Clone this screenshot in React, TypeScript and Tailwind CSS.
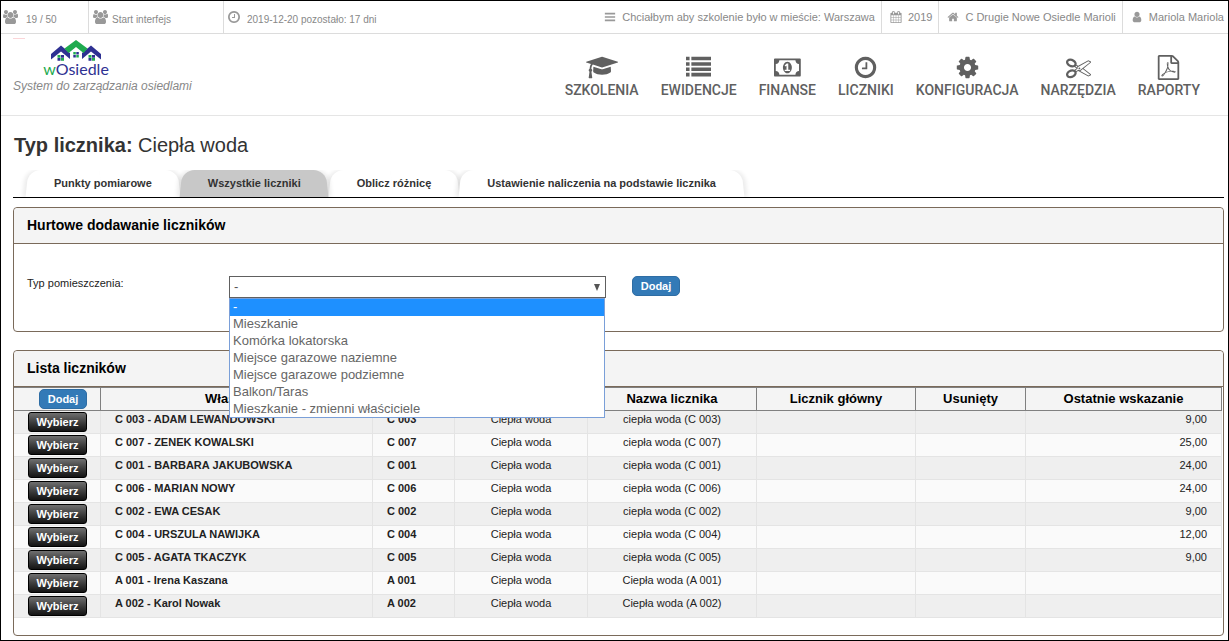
import React from "react";

const icons = {
  users: {
    box: "-64 0 1920 1792",
    d: "M529 896q-162 5-265 128h-134q-82 0-138-40.5t-56-118.5q0-353 124-353 6 0 43.5 21t97.5 42.5 119 21.5q67 0 133-23-5 37-5 66 0 159 93 290zm1071 637q0 120-73 189.5t-194 69.5h-874q-121 0-194-69.5t-73-189.5q0-53 3.5-103.5t14-109 26.5-108.5 43-97.5 62-81 85.5-53.5 111.5-20q10 0 43 21.5t73 48 107 48 135 21.5 135-21.5 107-48 73-48 43-21.5q61 0 111.5 20t85.5 53.5 62 81 43 97.5 26.5 108.5 14 109 3.5 103.5zm-1024-1277q0 106-75 181t-181 75-181-75-75-181 75-181 181-75 181 75 75 181zm704 384q0 159-112.5 271.5t-271.5 112.5-271.5-112.5-112.5-271.5 112.5-271.5 271.5-112.5 271.5 112.5 112.5 271.5zm576 225q0 78-56 118.5t-138 40.5h-134q-103-123-265-128 93-131 93-290 0-29-5-66 66 23 133 23 59 0 119-21.5t97.5-42.5 43.5-21q124 0 124 353zm-128-609q0 106-75 181t-181 75-181-75-75-181 75-181 181-75 181 75 75 181z",
  },
  clock: {
    box: "0 0 1792 1792",
    d: "M1024 544v448q0 14-9 23t-23 9h-320q-14 0-23-9t-9-23v-64q0-14 9-23t23-9h224v-352q0-14 9-23t23-9h64q14 0 23 9t9 23zm416 352q0-148-73-273t-198-198-273-73-273 73-198 198-73 273 73 273 198 198 273 73 273-73 198-198 73-273zm224 0q0 209-103 385.5t-279.5 279.5-385.5 103-385.5-103-279.5-279.5-103-385.5 103-385.5 279.5-279.5 385.5-103 385.5 103 279.5 279.5 103 385.5z",
  },
  bars: {
    box: "0 0 1792 1792",
    d: "M128 1280h1536v256h-1536zM128 768h1536v256h-1536zM128 256h1536v256h-1536z",
  },
  calendar: {
    box: "0 0 1792 1792",
    d: "M192 1664h288v-288h-288v288zm352 0h320v-288h-320v288zm-352-352h288v-320h-288v320zm352 0h320v-320h-320v320zm-352-384h288v-288h-288v288zm736 736h320v-288h-320v288zm-384-736h320v-288h-320v288zm768 736h288v-288h-288v288zm-384-352h320v-320h-320v320zm-352-864v-288q0-13-9.5-22.5t-22.5-9.5h-64q-13 0-22.5 9.5t-9.5 22.5v288q0 13 9.5 22.5t22.5 9.5h64q13 0 22.5-9.5t9.5-22.5zm736 864h288v-320h-288v320zm-384-384h320v-288h-320v288zm384 0h288v-288h-288v288zm32-480v-288q0-13-9.5-22.5t-22.5-9.5h-64q-13 0-22.5 9.5t-9.5 22.5v288q0 13 9.5 22.5t22.5 9.5h64q13 0 22.5-9.5t9.5-22.5zm384-64v1280q0 52-38 90t-90 38h-1408q-52 0-90-38t-38-90v-1280q0-52 38-90t90-38h128v-96q0-66 47-113t113-47h64q66 0 113 47t47 113v96h384v-96q0-66 47-113t113-47h64q66 0 113 47t47 113v96h128q52 0 90 38t38 90z",
  },
  home: {
    box: "0 0 1792 1792",
    d: "M1472 992v480q0 26-19 45t-45 19h-384v-384h-256v384h-384q-26 0-45-19t-19-45v-480q0-1 .5-3t.5-3l575-474 575 474q1 2 1 6zm223-69l-62 74q-8 9-21 11h-3q-13 0-21-7l-692-577-692 577q-12 8-24 7-13-2-21-11l-62-74q-8-10-7-23.5t11-21.5l719-599q32-26 76-26t76 26l244 204v-195q0-14 9-23t23-9h192q14 0 23 9t9 23v408l219 182q10 8 11 21.5t-7 23.5z",
  },
  user: {
    box: "0 0 1792 1792",
    d: "M1536 1399q0 109-62.5 187t-150.5 78h-854q-88 0-150.5-78t-62.5-187q0-85 8.5-160.5t31.5-152 58.5-131 94-89 134.5-34.5q131 128 313 128t313-128q76 0 134.5 34.5t94 89 58.5 131 31.5 152 8.5 160.5zm-256-887q0 159-112.5 271.5t-271.5 112.5-271.5-112.5-112.5-271.5 112.5-271.5 271.5-112.5 271.5 112.5 112.5 271.5z",
  },
  cap: {
    box: "0 0 2304 1792",
    d: "M1774 836l18 316q4 69-82 128t-235 93.5-323 34.5-323-34.5-235-93.5-82-128l18-316 574 181q22 7 48 7t48-7zm530-324q0 23-22 31l-1120 352q-4 1-10 1t-10-1l-652-206q-43 34-71 111.5t-34 178.5q63 36 63 109 0 69-58 107l58 433q2 14-8 25-9 11-24 11h-192q-15 0-24-11-10-11-8-25l58-433q-58-38-58-107 0-73 65-111 11-207 98-330l-333-104q-22-8-22-31t22-31l1120-352q4-1 10-1t10 1l1120 352q22 8 22 31z",
  },
  list: {
    box: "0 0 1792 1792",
    d: "M0 1280h256v256h-256zM0 896h256v256h-256zM0 512h256v256h-256zM384 1280h1408v256h-1408zM0 128h256v256h-256zM384 896h1408v256h-1408zM384 512h1408v256h-1408zM384 128h1408v256h-1408z",
  },
  money: {
    box: "0 0 1920 1792",
    d: "M768 1152h384v-96h-128v-448h-114l-148 137 77 80q42-37 55-57h2v288h-128v96zm512-256q0 70-21 142t-59.5 134-101.5 101-138 39-138-39-101.5-101-59.5-134-21-142 21-142 59.5-134 101.5-101 138-39 138 39 101.5 101 59.5 134 21 142zm512 256v-512q-106 0-181-75t-75-181h-1152q0 106-75 181t-181 75v512q106 0 181 75t75 181h1152q0-106 75-181t181-75zm128-832v1152q0 26-19 45t-45 19h-1792q-26 0-45-19t-19-45v-1152q0-26 19-45t45-19h1792q26 0 45 19t19 45z",
  },
  cog: {
    box: "0 0 1792 1792",
    d: "M1152 896q0-106-75-181t-181-75-181 75-75 181 75 181 181 75 181-75 75-181zm512-109v222q0 12-8 23t-20 13l-185 28q-19 54-39 91 35 50 107 138 10 12 10 25t-9 23q-27 37-99 108t-94 71q-12 0-26-9l-138-108q-44 23-91 38-16 136-29 186-7 28-36 28h-222q-14 0-24.5-8.5t-11.5-21.5l-28-184q-49-16-90-37l-141 107q-10 9-25 9-14 0-25-11-126-114-165-168-7-10-7-23 0-12 8-23 15-21 51-66.5t54-70.5q-27-50-41-99l-183-27q-13-2-21-12.5t-8-23.5v-222q0-12 8-23t19-13l186-28q14-46 39-92-40-57-107-138-10-12-10-24 0-10 9-23 26-36 98.5-107.5t94.5-71.5q13 0 26 10l138 107q44-23 91-38 16-136 29-186 7-28 36-28h222q14 0 24.5 8.5t11.5 21.5l28 184q49 16 90 37l142-107q9-9 24-9 13 0 25 10 129 119 165 170 7 8 7 22 0 12-8 23-15 21-51 66.5t-54 70.5q26 50 41 98l183 28q13 2 21 12.5t8 23.5z",
  },
  scissors: {
    box: "0 0 1792 1792",
    d: "M960 896q26 0 45 19t19 45-19 45-45 19-45-19-19-45 19-45 45-19zm300 64l507 398q28 20 25 56-5 35-35 51l-128 64q-13 7-29 7-17 0-31-8l-690-387-110 66q-8 4-12 5 14 49 10 97-7 77-56 147.5t-132 123.5q-132 84-277 84-136 0-222-78-90-84-79-207 7-76 56-147t131-124q132-84 278-84 83 0 151 31 9-13 22-22l122-73-122-73q-13-9-22-22-68 31-151 31-146 0-278-84-82-53-131-124t-56-147q-5-59 15.5-113t63.5-93q85-79 222-79 145 0 277 84 83 52 132 123t56 148q4 48-10 97 4 1 12 5l110 66 690-387q14-8 31-8 16 0 29 7l128 64q30 16 35 51 3 36-25 56zm-681-260q46-42 21-108t-106-117q-92-59-192-59-74 0-113 36-46 42-21 108t106 117q92 59 192 59 74 0 113-36zm-85 745q81-51 106-117t-21-108q-39-36-113-36-100 0-192 59-81 51-106 117t21 108q39 36 113 36 100 0 192-59zm178-613l96 58v-11q0-36 33-56l14-8-79-44-26 26q-3 3-10 11t-12 12q-2 2-4 3.5t-3 2.5zm224 224l96 32 736-576-128-64-768 431v113l-160 96 9 8q2 2 7 6 4 4 11 12t11 12l26 26zm704 416l128-64-520-408-177 138q-2 3-13 7z",
  },
  pdf: {
    box: "0 0 1792 1792",
    d: "M1596 380q28 28 48 76t20 88v1152q0 40-28 68t-68 28h-1344q-40 0-68-28t-28-68v-1600q0-40 28-68t68-28h896q40 0 88 20t76 48zm-444-244v376h376q-10-29-22-41l-313-313q-12-12-41-22zm384 1528v-1024h-416q-40 0-68-28t-28-68v-416h-768v1536h1280zm-514-593q33 26 84 56 59-7 117-7 147 0 177 49 16 22 2 52 0 1-1 2l-2 2v1q-6 38-71 38-48 0-115-20t-130-53q-221 24-392 83-153 262-242 262-15 0-28-7l-24-12q-1-1-6-5-10-10-6-36 9-40 56-91.5t132-96.5q14-9 23 6 2 2 2 4 52-85 107-197 68-136 104-262-24-82-30.5-159.5t6.5-127.5q11-40 42-40h22q23 0 35 15 18 21 9 68-2 6-4 8 1 3 1 8v30q-2 123-14 192 55 164 146 238zm-576 411q52-24 137-158-51 40-87.5 84t-49.5 74zm398-920q-15 42-2 132 1-7 7-44 0-3 7-43 1-4 4-8-1-1-1-2-1-2-1-3-1-22-13-36 0 1-1 2v2zm-124 661q135-54 284-81-2-1-13-9.5t-16-13.5q-76-67-127-176-27 86-83 197-30 56-45 83zm646-16q-24-24-140-24 76 28 124 28 14 0 18-1 0-1-2-3z",
  },
};

type IconName = keyof typeof icons;

function Icon({ name, className }: { name: IconName; className: string }) {
  return (
    <svg viewBox={icons[name].box} className={`w-auto shrink-0 ${className}`} fill="currentColor" aria-hidden="true">
      <path d={icons[name].d} />
    </svg>
  );
}

function Logo() {
  return (
    <a href="#" className="ml-[31px] flex w-16 flex-col items-center">
      <svg viewBox="0 0 50 21" className="h-[21px] w-[50px]" aria-hidden="true">
        <path d="M0 14 10 5.500 19 13V19l-9-7.500L0 19.500z" fill="#2e3192" />
        <path d="M50 14 40 5.500 31 13V19l9-7.500 10 8z" fill="#2e3192" />
        <path d="M13.500 8.500 25 0l11.500 8.500-4 4.500-7.500-6-7.500 6z" fill="#1fab4f" />
        <g fill="#1fab4f">
          <path d="M6.500 15h3v2.700h-3zM10 18h3v2.700h-3zM22.300 12h2.500v2.500h-2.500zM25.300 15h2.500v2.500h-2.500zM37.500 15h3v2.700h-3zM41 18h3v2.700h-3z" />
        </g>
        <g fill="#2e3192">
          <path d="M10 15h3v2.700h-3zM6.500 18h3v2.700h-3zM25.300 12h2.500v2.500h-2.500zM22.300 15h2.500v2.500h-2.500zM41 15h3v2.700h-3zM37.500 18h3v2.700h-3z" />
        </g>
      </svg>
      <span className="font-['Lato',sans-serif] text-base leading-4 text-[#2e3192]">
        <span className="text-[#1fab4f]">w</span>Osiedle
      </span>
    </a>
  );
}

const nav: { icon: IconName; label: string }[] = [
  { icon: "cap", label: "SZKOLENIA" },
  { icon: "list", label: "EWIDENCJE" },
  { icon: "money", label: "FINANSE" },
  { icon: "clock", label: "LICZNIKI" },
  { icon: "cog", label: "KONFIGURACJA" },
  { icon: "scissors", label: "NARZĘDZIA" },
  { icon: "pdf", label: "RAPORTY" },
];

const topLinks: { icon: IconName; label: string }[] = [
  { icon: "bars", label: "Chciałbym aby szkolenie było w mieście: Warszawa" },
  { icon: "calendar", label: "2019" },
  { icon: "home", label: "C Drugie Nowe Osiedle Marioli" },
  { icon: "user", label: "Mariola Mariola" },
];

const tabs = ["Punkty pomiarowe", "Wszystkie liczniki", "Oblicz różnicę", "Ustawienie naliczenia na podstawie licznika"];

const roomTypes = [
  "-",
  "Mieszkanie",
  "Komórka lokatorska",
  "Miejsce garazowe naziemne",
  "Miejsce garazowe podziemne",
  "Balkon/Taras",
  "Mieszkanie - zmienni właściciele",
];

const rows = [
  ["C 003 - ADAM LEWANDOWSKI", "C 003", "ciepła woda (C 003)", "9,00"],
  ["C 007 - ZENEK KOWALSKI", "C 007", "ciepła woda (C 007)", "25,00"],
  ["C 001 - BARBARA JAKUBOWSKA", "C 001", "ciepła woda (C 001)", "24,00"],
  ["C 006 - MARIAN NOWY", "C 006", "ciepła woda (C 006)", "24,00"],
  ["C 002 - EWA CESAK", "C 002", "ciepła woda (C 002)", "9,00"],
  ["C 004 - URSZULA NAWIJKA", "C 004", "ciepła woda (C 004)", "12,00"],
  ["C 005 - AGATA TKACZYK", "C 005", "ciepła woda (C 005)", "9,00"],
  ["A 001 - Irena Kaszana", "A 001", "Ciepła woda (A 001)", ""],
  ["A 002 - Karol Nowak", "A 002", "Ciepła woda (A 002)", ""],
];

const th = "h-6 border-t border-r border-b border-[#808080] p-0 text-center text-[13px] leading-4 font-bold text-black";
const td = "h-[23px] border-r border-b border-[#e4e4e4] px-3.5 py-0 align-top text-[11px] leading-4";

function AddButton() {
  return (
    <button
      type="button"
      className="block h-5 w-12 rounded-[5px] border border-[#2e6da4] bg-[#337ab7] text-[11px] leading-4 font-bold text-white"
    >
      Dodaj
    </button>
  );
}

function TopBar() {
  return (
    <div className="flex h-[33px] items-stretch border-b border-[#dcdcdc] text-[#888]">
      <div className="flex w-[88px] items-center gap-2 border-r border-[#dcdcdc] pl-0.5 text-[10px]">
        <Icon name="users" className="h-[14px] text-[#999]" />
        <span className="pt-1">19 / 50</span>
      </div>
      <div className="flex w-[135px] items-center gap-1 border-r border-[#dcdcdc] pl-1 text-[10px]">
        <Icon name="users" className="h-[14px] text-[#999]" />
        <span className="pt-1">Start interfejs</span>
      </div>
      <div className="flex items-center gap-1.5 pl-[3px] text-[10px]">
        <Icon name="clock" className="h-[14px] text-[#999]" />
        <span className="pt-1">2019-12-20 pozostało: 17 dni</span>
      </div>
      <div className="ml-auto flex divide-x divide-[#dcdcdc]">
        {topLinks.map((l) => (
          <a key={l.label} href="#" className="flex items-center gap-1.5 pr-1.5 pl-2 text-[11px] whitespace-nowrap last:pr-1">
            <Icon name={l.icon} className="h-3 text-[#999]" />
            {l.label}
          </a>
        ))}
      </div>
    </div>
  );
}

function Header() {
  return (
    <header className="flex h-[82px] items-start justify-between border-b border-[#e5e5e5] pr-7 pl-3">
      <div className="flex flex-col pt-1">
        <span className="h-px w-3 bg-[#fbd5d8]" />
        <div className="pt-px">
          <Logo />
          <p className="text-xs leading-[18px] text-[#888] italic">System do zarządzania osiedlami</p>
        </div>
      </div>
      <nav className="flex gap-[22px] pt-[21px] text-[#606060]">
        {nav.map((n) => (
          <a key={n.label} href="#" className="flex flex-col items-center">
            <Icon name={n.icon} className="h-[25px]" />
            <span className="font-['Roboto',sans-serif] text-sm leading-5 font-medium">{n.label}</span>
          </a>
        ))}
      </nav>
    </header>
  );
}

function Tabs() {
  const half =
    "before:absolute before:inset-y-0 before:left-0.5 before:-z-10 before:w-1/2 before:-skew-x-6 before:rounded-tl-xl before:shadow-[-3px_0_4px_rgba(0,0,0,0.08)] after:absolute after:inset-y-0 after:right-0.5 after:-z-10 after:w-1/2 after:skew-x-6 after:rounded-tr-xl after:shadow-[3px_0_4px_rgba(0,0,0,0.08)]";
  return (
    <div role="tablist" className="flex overflow-hidden border-b border-black pl-3">
      {tabs.map((t, i) => (
        <button
          key={t}
          type="button"
          role="tab"
          aria-selected={i === 1}
          className={`relative isolate -mr-0.5 h-[27px] px-[29px] text-[11px] font-bold text-[#333] ${half} ${
            i === 1 ? "z-10 before:bg-[#c8c8c8] after:bg-[#c8c8c8]" : "before:bg-white after:bg-white"
          }`}
        >
          {t}
        </button>
      ))}
    </div>
  );
}

function RoomSelect() {
  return (
    <div className="relative w-[377px]">
      <select
        id="room-type"
        defaultValue="-"
        className="block h-[22px] w-full appearance-none border border-[#606060] bg-white pl-1 text-[13px] text-[#555]"
      >
        {roomTypes.map((r) => (
          <option key={r}>{r}</option>
        ))}
      </select>
      <svg viewBox="0 0 6 7" className="pointer-events-none absolute top-2 right-1.5 h-[7px] w-1.5" aria-hidden="true">
        <path d="M0 0h6L3 7z" fill="#555" />
      </svg>
      <ul
        role="listbox"
        aria-label="Typ pomieszczenia"
        className="absolute top-full left-0 z-20 grid h-[120px] w-[376px] auto-rows-fr border border-[#7a9fd8] bg-white text-[13px] leading-4 text-[#666]"
      >
        {roomTypes.map((r, i) => (
          <li
            key={r}
            role="option"
            aria-selected={i === 0}
            className="flex items-center pl-[3px] aria-selected:bg-[#1e90ff] aria-selected:text-white"
          >
            {r}
          </li>
        ))}
      </ul>
    </div>
  );
}

function Panel({ title, className, children }: { title: string; className: string; children: React.ReactNode }) {
  return (
    <section className={`rounded border border-[#7a6a5a] ${className}`}>
      <h2 className="flex h-9 items-center rounded-t border-b border-[#7a6a5a] bg-[#f4f4f4] pb-0.5 pl-[13px] text-sm font-bold text-black">
        {title}
      </h2>
      {children}
    </section>
  );
}

function MeterTable() {
  return (
    <table className="w-full table-fixed border-separate border-spacing-0 pr-px text-[#222]">
      <colgroup>
        <col className="w-[87px]" />
        <col className="w-[272px]" />
        <col className="w-[82px]" />
        <col className="w-[133px]" />
        <col className="w-[169px]" />
        <col className="w-[159px]" />
        <col className="w-[110px]" />
        <col />
      </colgroup>
      <thead className="bg-[#f4f4f4]">
        <tr>
          <th className={th}>
            <div className="flex justify-end pr-[13px]">
              <AddButton />
            </div>
          </th>
          <th className={th}>Właściciel</th>
          <th className={th}>Lokal</th>
          <th className={th}>Typ licznika</th>
          <th className={th}>Nazwa licznika</th>
          <th className={th}>Licznik główny</th>
          <th className={th}>Usunięty</th>
          <th className={th}>Ostatnie wskazanie</th>
        </tr>
      </thead>
      <tbody>
        {rows.map(([owner, unit, name, value]) => (
          <tr key={owner} className="odd:bg-[#efefef] even:bg-[#fafafa]">
            <td className="h-[23px] border-r border-b border-[#e4e4e4] p-0 pt-px pl-3.5 align-top">
              <button
                type="button"
                className="block h-5 w-[59px] rounded-[3px] border border-black bg-linear-to-b from-[#707070] to-[#141414] text-[11px] leading-4 font-bold text-white"
              >
                Wybierz
              </button>
            </td>
            <td className={`${td} font-bold`}>{owner}</td>
            <td className={`${td} font-bold`}>{unit}</td>
            <td className={`${td} text-center`}>Ciepła woda</td>
            <td className={`${td} text-center`}>{name}</td>
            <td className={td} />
            <td className={td} />
            <td className={`${td} text-right`}>{value}</td>
          </tr>
        ))}
      </tbody>
    </table>
  );
}

export default function App() {
  return (
    <div className="min-h-screen border border-black bg-white font-['Liberation_Sans',Arial,sans-serif] text-[#222]">
      <TopBar />
      <Header />
      <main className="pr-1 pb-1 pl-3">
        <h1 className="pt-[15px] pb-[11px] pl-px text-xl leading-7 text-[#333]">
          <b>Typ licznika:</b> Ciepła woda
        </h1>
        <Tabs />
        <Panel title="Hurtowe dodawanie liczników" className="mt-[9px]">
          <form className="flex h-[87px] items-start pt-8 pl-[13px]" onSubmit={(e) => e.preventDefault()}>
            <label htmlFor="room-type" className="w-[202px] text-[11px] leading-[14px]">
              Typ pomieszczenia:
            </label>
            <RoomSelect />
            <div className="pl-[26px]">
              <AddButton />
            </div>
          </form>
        </Panel>
        <Panel title="Lista liczników" className="mt-[18px] pb-[17px]">
          <MeterTable />
        </Panel>
      </main>
    </div>
  );
}
